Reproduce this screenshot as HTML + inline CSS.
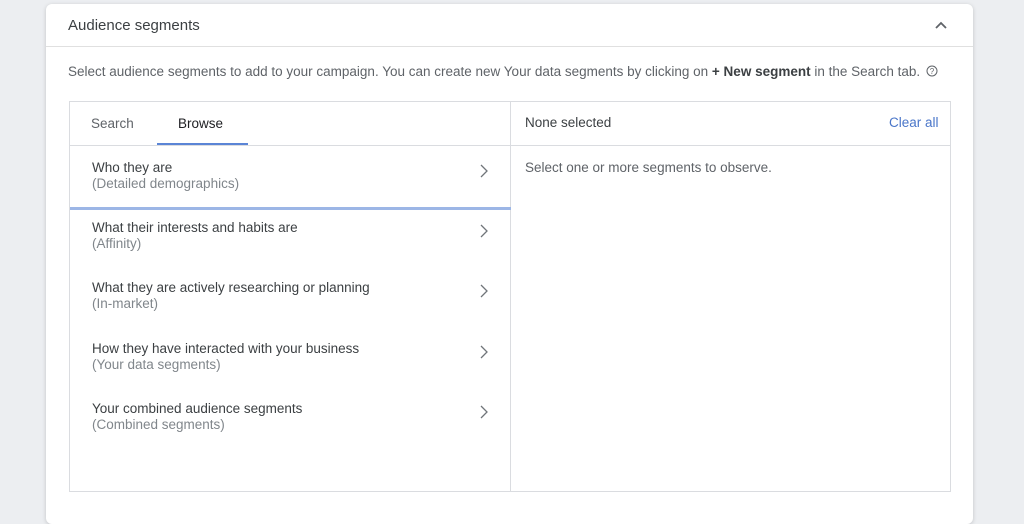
<!DOCTYPE html>
<html><head><meta charset="utf-8"><style>
*{box-sizing:border-box;margin:0;padding:0}
body{width:1024px;height:493px;overflow:hidden;background:#eceef1;font-family:"Liberation Sans",Arial,sans-serif;position:relative}
.card{position:absolute;left:46px;top:4px;width:927px;height:520px;background:#fff;border-radius:6px;box-shadow:0 1px 4px rgba(0,0,0,.18)}
.hdr{position:absolute;left:0;top:0;width:100%;height:43px;border-bottom:1px solid #e0e0e0}
.hdr span{position:absolute;left:22px;top:13px;font-size:15px;color:#3c4043}
.chev{position:absolute;left:888px;top:16px}
.desc{position:absolute;left:22px;top:60px;font-size:13.5px;color:#5f6368;white-space:nowrap}
.desc b{color:#3c4043}
.box{position:absolute;left:23px;top:97px;width:882px;height:391px;border:1px solid #dadce0}
.vd{position:absolute;left:440px;top:0;width:1px;height:100%;background:#dadce0}
.th{position:absolute;left:0;top:43px;width:100%;height:1px;background:#dadce0}
.t{position:absolute;top:14px;font-size:13.5px}
.ul{position:absolute;left:87px;top:41px;width:91px;height:2px;background:#5b85d6}
.bar{position:absolute;left:0;top:105px;width:441px;height:3px;background:#9cb6e6}
.row{position:absolute;left:22px;font-size:13.5px;line-height:16px}
.row .a{color:#3c4043}.row .b{color:#80868b}
.rc{position:absolute;left:409px}
</style></head><body>
<div class="card">
<div class="hdr"><span>Audience segments</span>
<svg class="chev" width="14" height="10" viewBox="0 0 14 10"><path d="M2 8 L7 3 L12 8" fill="none" stroke="#5f6368" stroke-width="1.8"/></svg></div>
<div class="desc">Select audience segments to add to your campaign. You can create new Your data segments by clicking on <b>+ New segment</b> in the Search tab. <svg width="12" height="12" viewBox="0 0 12 12" style="vertical-align:-1px;margin-left:2px"><circle cx="6" cy="6" r="5" fill="none" stroke="#5f6368" stroke-width="1"/><text x="6" y="9" font-size="8" text-anchor="middle" fill="#5f6368" font-family="Liberation Sans">?</text></svg></div>
<div class="box">
<div class="vd"></div><div class="th"></div>
<div class="t" style="left:21px;color:#5f6368">Search</div>
<div class="t" style="left:108px;color:#202124">Browse</div>
<div class="ul"></div>
<div class="t" style="left:455px;top:13px;color:#3c4043">None selected</div>
<div class="t" style="left:819px;top:13px;color:#4a76c9">Clear all</div>
<div class="t" style="left:455px;top:58px;color:#5f6368">Select one or more segments to observe.</div>
<div class="bar"></div>
<div class="row" style="top:58px"><div class="a">Who they are</div><div class="b">(Detailed demographics)</div></div>
<div class="row" style="top:118px"><div class="a">What their interests and habits are</div><div class="b">(Affinity)</div></div>
<div class="row" style="top:178px"><div class="a">What they are actively researching or planning</div><div class="b">(In-market)</div></div>
<div class="row" style="top:239px"><div class="a">How they have interacted with your business</div><div class="b">(Your data segments)</div></div>
<div class="row" style="top:299px"><div class="a">Your combined audience segments</div><div class="b">(Combined segments)</div></div>
<svg class="rc" style="top:61px" width="10" height="16" viewBox="0 0 10 16"><path d="M2 2 L8 8 L2 14" fill="none" stroke="#70757a" stroke-width="1.3"/></svg>
<svg class="rc" style="top:121px" width="10" height="16" viewBox="0 0 10 16"><path d="M2 2 L8 8 L2 14" fill="none" stroke="#70757a" stroke-width="1.3"/></svg>
<svg class="rc" style="top:181px" width="10" height="16" viewBox="0 0 10 16"><path d="M2 2 L8 8 L2 14" fill="none" stroke="#70757a" stroke-width="1.3"/></svg>
<svg class="rc" style="top:242px" width="10" height="16" viewBox="0 0 10 16"><path d="M2 2 L8 8 L2 14" fill="none" stroke="#70757a" stroke-width="1.3"/></svg>
<svg class="rc" style="top:302px" width="10" height="16" viewBox="0 0 10 16"><path d="M2 2 L8 8 L2 14" fill="none" stroke="#70757a" stroke-width="1.3"/></svg>
</div>
</div>
</body></html>
